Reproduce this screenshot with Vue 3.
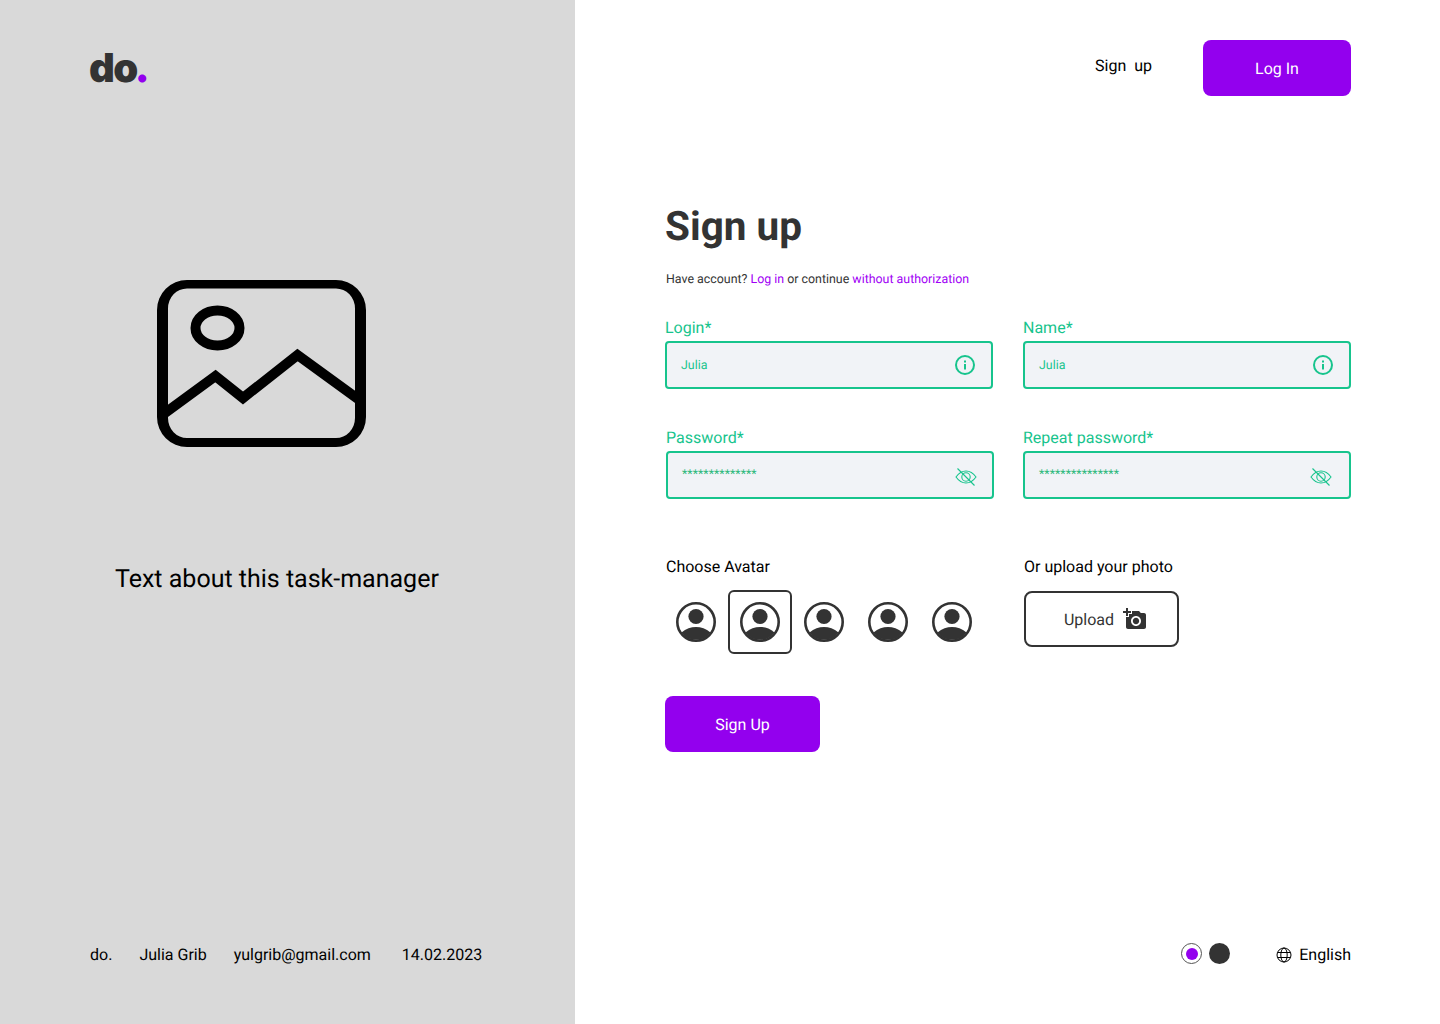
<script setup>
const avatars = [1, 2, 3, 4, 5]
const selected = 2
const fields = [
  { label: 'Login*', value: 'Julia', icon: 'info' },
  { label: 'Name*', value: 'Julia', icon: 'info' },
  { label: 'Password*', value: '**************', icon: 'eye', shift: true },
  { label: 'Repeat password*', value: '***************', icon: 'eye' }
]
</script>

<template>
  <main class="page">
    <aside class="side">
      <div class="logo">do<span>.</span></div>
      <svg class="picture" width="209" height="167" viewBox="0 0 209 167">
        <path fill-rule="evenodd" d="M30 0H179A30 30 0 0 1 209 30V137A30 30 0 0 1 179 167H30A30 30 0 0 1 0 137V30A30 30 0 0 1 30 0ZM30 8.500H179A19 20 0 0 1 198 28.500V138A19 20 0 0 1 179 158H30A19 20 0 0 1 11 138V28.500A19 20 0 0 1 30 8.500Z" />
        <ellipse cx="60.500" cy="48" rx="22" ry="17.500" fill="none" stroke="#000" stroke-width="10" />
        <polyline points="8,133 58.500,96 86,118 140.500,75 201,119" fill="none" stroke="#000" stroke-width="10" />
      </svg>
      <p class="about">Text about this task-manager</p>
      <footer class="side-foot">
        <span>do.</span>
        <span>Julia Grib</span>
        <span>yulgrib@gmail.com</span>
        <span class="date">14.02.2023</span>
      </footer>
    </aside>

    <section class="content">
      <header class="top">
        <a class="signup-link">Sign&nbsp; up</a>
        <button class="primary">Log In</button>
      </header>

      <h1>Sign up</h1>
      <p class="sub">Have account? <a>Log in</a> or continue <a>without authorization</a></p>

      <div class="fields">
        <label v-for="f in fields" :key="f.label" class="field" :class="{ shift: f.shift }">
          <span class="field-label">{{ f.label }}</span>
          <span class="box">
            <span class="box-text" :class="{ stars: f.icon === 'eye' }">{{ f.value }}</span>
            <svg v-if="f.icon === 'info'" class="info" width="22" height="22" viewBox="0 0 22 22" fill="none" stroke="#17c48d">
              <circle cx="11" cy="11" r="9" stroke-width="2" />
              <path d="M11 10v5.500M11 6.500v2" stroke-width="2" />
            </svg>
            <svg v-else class="eye" width="22" height="18" viewBox="0 0 22 18" fill="none" stroke="#17c48d" stroke-width="1.100">
              <path d="M1 9C4 4.800 7.500 3 11 3S18 4.800 21 9C18 13.200 14.500 15 11 15S4 13.200 1 9Z" />
              <circle cx="11" cy="9" r="4.200" />
              <path d="M2.500 .5L19.500 17.500" />
            </svg>
          </span>
        </label>
      </div>

      <div class="choose">
        <div class="avatars">
          <h2>Choose Avatar</h2>
          <div class="avatar-row">
            <div v-for="a in avatars" :key="a" class="avatar" :class="{ active: a === selected }">
              <svg width="40" height="40" viewBox="0 0 40 40">
                <circle cx="20" cy="20" r="18.700" fill="#fff" stroke="#333" stroke-width="2.600" />
                <circle cx="20" cy="14.500" r="7.600" fill="#333" />
                <path d="M5.500 30.500C10 26.500 15 25 20 25S30 26.500 34.500 30.500A18 18 0 0 1 5.500 30.500Z" fill="#333" />
              </svg>
            </div>
          </div>
        </div>
        <div class="upload">
          <h2>Or upload your photo</h2>
          <button class="upload-btn">
            Upload
            <svg width="24" height="24" viewBox="0 0 24 24" fill="#333">
              <path d="M3 4V1h2v3h3v2H5v3H3V6H0V4h3zm3 6V7h3V4h7l1.830 2H21c1.100 0 2 .9 2 2v12c0 1.100-.9 2-2 2H5c-1.100 0-2-.9-2-2V10h3zm7 9c2.760 0 5-2.240 5-5s-2.240-5-5-5-5 2.240-5 5 2.240 5 5 5zm-3.200-5c0 1.770 1.430 3.200 3.200 3.200s3.200-1.430 3.200-3.200-1.430-3.200-3.200-3.200-3.200 1.430-3.200 3.200z" />
            </svg>
          </button>
        </div>
      </div>

      <button class="primary submit">Sign Up</button>

      <footer class="content-foot">
        <span class="theme on"><i></i></span>
        <span class="theme dark"></span>
        <span class="lang">
          <svg width="16" height="16" viewBox="0 0 16 16" fill="none" stroke="#000" stroke-width="1">
            <circle cx="8" cy="8" r="7" />
            <ellipse cx="8" cy="8" rx="3.200" ry="7" />
            <path d="M1.500 5.500h13M1.500 10.500h13" />
          </svg>
          English
        </span>
      </footer>
    </section>
  </main>
</template>

<style scoped>
.page {
  display: flex;
  width: 1440px;
  height: 1024px;
  background: #fff;
  font-family: Roboto, "Liberation Sans", sans-serif;
  color: #000;
  overflow: hidden;
}

.page * {
  text-rendering: geometricPrecision;
}

.side {
  width: 575px;
  flex: none;
  background: #d9d9d9;
  display: flex;
  flex-direction: column;
  padding: 42px 0 0 89px;
  box-sizing: border-box;
}

.logo {
  font-family: Inter, sans-serif;
  font-weight: 900;
  font-size: 40px;
  line-height: 51px;
  letter-spacing: -1.500px;
  color: #333;
}

.logo span {
  margin-left: -2px;
  color: #9300ee;
}

.picture {
  margin: 187px 0 0 68px;
}

.about {
  margin: 116px 0 0 26px;
  font-size: 25px;
  line-height: 34px;
}

.side-foot {
  margin-top: auto;
  margin-bottom: 59px;
  margin-left: 1px;
  display: flex;
  gap: 27px;
  font-size: 16px;
  line-height: 20px;
}

.side-foot .date {
  margin-left: 4px;
}

.content {
  flex: 1;
  display: flex;
  flex-direction: column;
  padding: 40px 89px 0 90px;
  box-sizing: border-box;
}

.top {
  display: flex;
  justify-content: flex-end;
  align-items: center;
  gap: 51px;
}

.signup-link {
  font-size: 16px;
  line-height: 20px;
  margin-top: -5px;
}

.primary {
  width: 148px;
  height: 56px;
  border: none;
  border-radius: 8px;
  background: #9300ee;
  color: #fff;
  font: 400 16px Roboto, sans-serif;
}

h1 {
  margin: 105px 0 0;
  font-size: 40.500px;
  line-height: 50px;
  font-weight: 700;
  color: #333;
}

.sub {
  margin: 21px 0 0 1px;
  font-size: 12.400px;
  line-height: 16px;
  color: #333;
}

.sub a {
  color: #9f00f5;
}

.fields {
  display: grid;
  grid-template-columns: 328px 328px;
  column-gap: 30px;
  row-gap: 40px;
  margin-top: 31px;
}

.field {
  display: flex;
  flex-direction: column;
  color: #17c48d;
}

.field.shift {
  transform: translateX(1px);
}

.field-label {
  font-size: 16px;
  line-height: 18px;
  height: 22px;
}

.box {
  height: 48px;
  box-sizing: border-box;
  display: flex;
  align-items: center;
  justify-content: space-between;
  padding: 0 15px 0 14px;
  border: 2px solid #17c48d;
  border-radius: 4px;
  background: #f1f3f7;
}

.box-text {
  font-size: 12.400px;
}

.box-text.stars {
  margin-bottom: 2px;
  color: #2cb87c;
}

.eye {
  margin-top: 4px;
  margin-right: 2px;
}

.shift .eye {
  margin-right: 0;
}

.choose {
  display: flex;
  margin-top: 58px;
}

h2 {
  margin: 0;
  font-size: 16px;
  line-height: 20px;
  font-weight: 400;
}

.avatars {
  width: 359px;
  padding-left: 1px;
  box-sizing: border-box;
}

.avatar-row {
  display: flex;
  margin: 13px 0 0 -2px;
}

.avatar {
  width: 64px;
  height: 64px;
  box-sizing: border-box;
  display: flex;
  align-items: center;
  justify-content: center;
  border-radius: 6px;
}

.avatar.active {
  border: 2px solid #333;
}

.upload-btn {
  display: flex;
  align-items: center;
  justify-content: center;
  gap: 9px;
  width: 155px;
  height: 56px;
  margin-top: 14px;
  padding: 0 0 0 8px;
  border: 2px solid #333;
  border-radius: 8px;
  background: #fff;
  color: #333;
  font: 400 16px Roboto, sans-serif;
}

.submit {
  width: 155px;
  margin-top: 42px;
}

.content-foot {
  margin-top: auto;
  margin-bottom: 60px;
  display: flex;
  justify-content: flex-end;
  align-items: center;
  gap: 7px;
}

.theme {
  width: 21px;
  height: 21px;
  box-sizing: border-box;
  border-radius: 50%;
  display: flex;
  align-items: center;
  justify-content: center;
}

.theme.on {
  border: 1px solid #555;
}

.theme.on i {
  width: 12px;
  height: 12px;
  border-radius: 50%;
  background: #9300ee;
}

.theme.dark {
  background: #333;
}

.lang {
  display: flex;
  align-items: center;
  gap: 7px;
  margin-left: 39px;
  margin-bottom: -2px;
  font-size: 16px;
  line-height: 20px;
}
</style>
